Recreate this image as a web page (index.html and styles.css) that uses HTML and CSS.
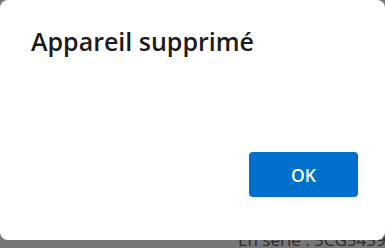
FILE: index.html
```html
<!DOCTYPE html>
<html lang="fr">
<head>
<meta charset="utf-8">
<link rel="stylesheet" href="styles.css">
</head>
<body>
<div class="dialog">
  <h1 class="title">Appareil supprimé</h1>
  <div class="actions"><button class="ok">OK</button></div>
</div>
<div class="behind">En série : 5CG5459</div>
</body>
</html>
```
FILE: styles.css
```css
html, body { margin: 0; padding: 0; }
body {
  width: 385px;
  height: 248px;
  overflow: hidden;
  background: #777777;
  font-family: "Open Sans", "Noto Sans", sans-serif;
}
.dialog {
  position: relative;
  z-index: 1;
  box-sizing: border-box;
  height: 240px;
  background: #ffffff;
  border-radius: 8px;
  display: flex;
  flex-direction: column;
  justify-content: space-between;
  padding: 24px 27px 43px 31px;
}
.title {
  margin: 0;
  font-size: 25px;
  font-weight: 600;
  color: #1b1b1b;
  line-height: 34px;
  letter-spacing: 0;
}
.actions {
  display: flex;
  justify-content: flex-end;
}
.ok {
  width: 109px;
  height: 45px;
  border: none;
  border-radius: 4px;
  background: #0070cc;
  color: #ffffff;
  font-family: "Open Sans", "Noto Sans", sans-serif;
  font-size: 17.5px;
  font-weight: 600;
  padding: 0;
}
.behind {
  margin-top: -12px;
  padding-left: 238px;
  font-size: 17px;
  line-height: 24px;
  color: #2a2a2a;
  white-space: nowrap;
}
```
